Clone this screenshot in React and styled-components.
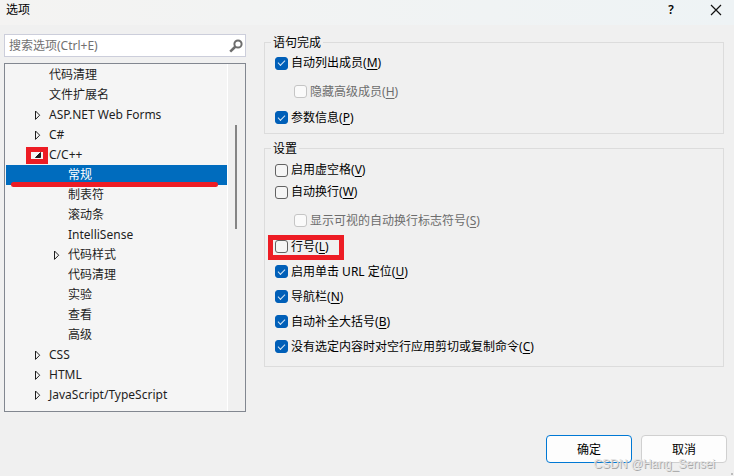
import React from 'react';
import styled, { createGlobalStyle, css } from 'styled-components';

const treeItems = [
  { label: '代码清理', level: 1 },
  { label: '文件扩展名', level: 1 },
  { label: 'ASP.NET Web Forms', level: 1, arrow: 'closed' },
  { label: 'C#', level: 1, arrow: 'closed' },
  { label: 'C/C++', level: 1, arrow: 'open', marked: true },
  { label: '常规', level: 2, selected: true },
  { label: '制表符', level: 2 },
  { label: '滚动条', level: 2 },
  { label: 'IntelliSense', level: 2 },
  { label: '代码样式', level: 2, arrow: 'closed' },
  { label: '代码清理', level: 2 },
  { label: '实验', level: 2 },
  { label: '查看', level: 2 },
  { label: '高级', level: 2 },
  { label: 'CSS', level: 1, arrow: 'closed' },
  { label: 'HTML', level: 1, arrow: 'closed' },
  { label: 'JavaScript/TypeScript', level: 1, arrow: 'closed' },
];

const completionOptions = [
  { label: '自动列出成员', hotkey: 'M', checked: true, compact: true },
  { label: '隐藏高级成员', hotkey: 'H', nested: true },
  { label: '参数信息', hotkey: 'P', checked: true },
];

const settingOptions = [
  { label: '启用虚空格', hotkey: 'V', compact: true },
  { label: '自动换行', hotkey: 'W', compact: true },
  { label: '显示可视的自动换行标志符号', hotkey: 'S', nested: true },
  { label: '行号', hotkey: 'L', marked: true },
  { label: '启用单击 URL 定位', hotkey: 'U', checked: true },
  { label: '导航栏', hotkey: 'N', checked: true },
  { label: '自动补全大括号', hotkey: 'B', checked: true },
  { label: '没有选定内容时对空行应用剪切或复制命令', hotkey: 'C', checked: true },
];

const Arrow = ({ state }) => (
  <svg width="9" height="10" viewBox="0 0 9 10">
    {state === 'open' ? (
      <path d="M7.5 2.5v5h-5z" fill="#1e1e1e" stroke="#1e1e1e" />
    ) : (
      <path d="M2.5 1v8.4l4.2-4.2z" fill="none" stroke="#1e1e1e" />
    )}
  </svg>
);

const Option = ({ label, hotkey, checked, nested, compact, marked }) => (
  <OptionRow $nested={nested} $compact={compact}>
    <OptionLabel $disabled={nested}>
      <Checkbox type="checkbox" defaultChecked={checked} disabled={nested} />
      <span>
        {label}(<u>{hotkey}</u>)
      </span>
      {marked && <OptionMark />}
    </OptionLabel>
  </OptionRow>
);

const App = () => {
  return (
    <Dialog>
      <GlobalStyle />
      <TitleBar>
        <Title>选项</Title>
        <TitleButton aria-label="帮助">?</TitleButton>
        <TitleButton aria-label="关闭">
          <svg width="12" height="12" viewBox="0 0 12 12">
            <path d="M1 1l10 10M11 1L1 11" stroke="#111" strokeWidth="1.2" />
          </svg>
        </TitleButton>
      </TitleBar>

      <Body>
        <Sidebar>
          <SearchBox>
            <SearchInput type="text" aria-label="搜索选项" placeholder="搜索选项(Ctrl+E)" />
            <SearchButton aria-label="搜索">
              <svg width="14" height="14" viewBox="0 0 14 14" fill="none" stroke="#6d6d6d">
                <circle cx="9" cy="5" r="3.6" strokeWidth="2" />
                <path d="M6.5 7.5L1.2 12.6" strokeWidth="2.6" />
              </svg>
            </SearchButton>
          </SearchBox>

          <TreePanel>
            <Tree role="tree">
              {treeItems.map((item, i) => (
                <TreeItem
                  key={i}
                  role="treeitem"
                  aria-selected={!!item.selected}
                  $level={item.level}
                  $selected={item.selected}
                >
                  <ArrowSlot>
                    {item.arrow && <Arrow state={item.arrow} />}
                    {item.marked && <ArrowMark />}
                  </ArrowSlot>
                  {item.label}
                  {item.selected && <Underline />}
                </TreeItem>
              ))}
            </Tree>
            <Scrollbar>
              <Thumb />
            </Scrollbar>
          </TreePanel>
        </Sidebar>

        <Content>
          <Group>
            <Legend>语句完成</Legend>
            {completionOptions.map((o) => <Option key={o.hotkey} {...o} />)}
          </Group>
          <Group $roomy>
            <Legend>设置</Legend>
            {settingOptions.map((o) => <Option key={o.hotkey} {...o} />)}
          </Group>
        </Content>
      </Body>

      <Footer>
        <DialogButton $primary>确定</DialogButton>
        <DialogButton>取消</DialogButton>
      </Footer>
      <Watermark>CSDN @Hang_Sensei</Watermark>
      <Grip />
    </Dialog>
  );
};

export default App;

const GlobalStyle = createGlobalStyle`
  * {
    box-sizing: border-box;
  }

  body {
    margin: 0;
    background: #f0f0f0;
  }

  body, button, input {
    font-family: "Noto Sans", "Noto Sans CJK SC", sans-serif;
    font-size: 12px;
  }
`;

const Dialog = styled.main`
  position: relative;
  display: flex;
  flex-direction: column;
  min-height: 100vh;
  overflow: hidden;
  color: #000;
`;

const TitleBar = styled.header`
  display: flex;
  align-items: center;
  height: 25px;
  padding: 0 4px 6px 6px;
  background: linear-gradient(90deg, #f4f3f2, #eef3f5);
`;

const Title = styled.h1`
  flex: 1;
  margin: 0;
  font-size: 12px;
  line-height: 18px;
  font-weight: 400;
`;

const TitleButton = styled.button`
  display: grid;
  place-items: center;
  width: 28px;
  height: 18px;
  margin-left: 17px;
  padding: 0;
  border: 0;
  background: none;
  color: #000;
  font-weight: 600;
  line-height: 18px;
`;

const Body = styled.div`
  flex: 1;
  display: grid;
  grid-template-columns: 121fr 230fr;
  gap: 18px;
  padding: 9px 10px 0 4px;
`;

const Sidebar = styled.aside`
  display: flex;
  flex-direction: column;
  gap: 6px;
`;

const SearchBox = styled.div`
  display: flex;
  align-items: center;
  height: 23px;
  border: 1px solid #cccedb;
  background: #fff;
`;

const SearchInput = styled.input`
  flex: 1;
  min-width: 0;
  padding: 0 4px;
  border: 0;
  outline: 0;
  background: transparent;

  &::placeholder {
    color: #717171;
    opacity: 1;
  }
`;

const SearchButton = styled.button`
  display: flex;
  padding: 0 2px;
  border: 0;
  background: none;
`;

const TreePanel = styled.div`
  display: flex;
  border: 1px solid #828790;
  background: #f5f5f5;
`;

const Tree = styled.ul`
  flex: 1;
  margin: 0;
  padding: 1px 0 6px 1px;
  list-style: none;
  color: #1e1e1e;
`;

const TreeItem = styled.li`
  position: relative;
  display: flex;
  align-items: center;
  height: 20px;
  padding-left: ${(p) => (p.$level === 2 ? 46 : 27)}px;
  line-height: 20px;
  white-space: nowrap;
  ${(p) =>
    p.$selected &&
    css`
      background: #006cbe;
      color: #fff;
    `}
`;

const ArrowSlot = styled.span`
  position: relative;
  display: flex;
  width: 16px;
`;

const ArrowMark = styled.span`
  position: absolute;
  top: -3px;
  left: -7px;
  width: 22px;
  height: 17px;
  border: 5px solid #ed1c24;
`;

const Underline = styled.span`
  position: absolute;
  z-index: 1;
  left: 5px;
  right: 9px;
  bottom: -2px;
  height: 5px;
  border-radius: 3px;
  background: #ed1c24;
`;

const Scrollbar = styled.div`
  width: 18px;
  padding: 61px 8px 0 7px;
  border-left: 1px solid #fff;
  background: #f0f0f0;
`;

const Thumb = styled.div`
  height: 104px;
  background: #858585;
`;

const Content = styled.section`
  display: flex;
  flex-direction: column;
  gap: 6px;
`;

const Group = styled.fieldset`
  min-width: 0;
  margin: 0;
  padding: ${(p) => (p.$roomy ? '2px 10px 7px' : '1px 10px 3px')};
  border: 1px solid #dcdcdc;
`;

const Legend = styled.legend`
  margin-left: -4px;
  padding: 0 2px;
  line-height: 17px;
`;

const OptionRow = styled.div`
  display: flex;
  align-items: center;
  height: ${(p) => (p.$compact ? 22 : 25)}px;
  ${(p) =>
    p.$nested &&
    css`
      margin: 5px 0 1px 19px;
    `}
`;

const OptionLabel = styled.label`
  position: relative;
  display: flex;
  align-items: center;
  gap: 3px;
  line-height: 18px;
  color: ${(p) => (p.$disabled ? '#6d6d6d' : '#000')};

  u {
    text-underline-offset: 2px;
  }
`;

const Checkbox = styled.input`
  appearance: none;
  width: 13px;
  height: 13px;
  margin: 0;
  border: 1px solid #626262;
  border-radius: 3px;
  background: #f5f5f5;

  &:disabled {
    border-color: #c5c5c5;
    background: #fafafa;
  }

  &:checked {
    display: grid;
    place-items: center;
    border-color: #005fb8;
    background: #005fb8;
  }

  &:checked::before {
    content: '';
    width: 6px;
    height: 3px;
    margin-bottom: 2px;
    border-left: 1px solid #d6e6f5;
    border-bottom: 1px solid #d6e6f5;
    transform: rotate(-45deg);
  }
`;

const OptionMark = styled.span`
  position: absolute;
  top: -3px;
  left: -7px;
  right: -15px;
  height: 25px;
  border: 5px solid #ed1c24;
`;

const Footer = styled.footer`
  display: flex;
  justify-content: flex-end;
  gap: 9px;
  padding: 0 7px 13px 0;
`;

const DialogButton = styled.button`
  width: 86px;
  height: 28px;
  border: 1px solid ${(p) => (p.$primary ? '#0078d4' : '#d0d0d0')};
  border-radius: 4px;
  background: #fdfdfd;
  color: #000;
`;

const Watermark = styled.span`
  position: absolute;
  right: 19px;
  bottom: 3px;
  font-family: "Liberation Sans", sans-serif;
  font-size: 12px;
  line-height: 18px;
  color: #e4e4e4;
  text-shadow: 1px 1px 0 #a8a8a8;
  pointer-events: none;
`;

const Grip = styled.span`
  position: absolute;
  right: 1px;
  bottom: 1px;
  width: 2px;
  height: 2px;
  background: #bdbdbd;
`;
